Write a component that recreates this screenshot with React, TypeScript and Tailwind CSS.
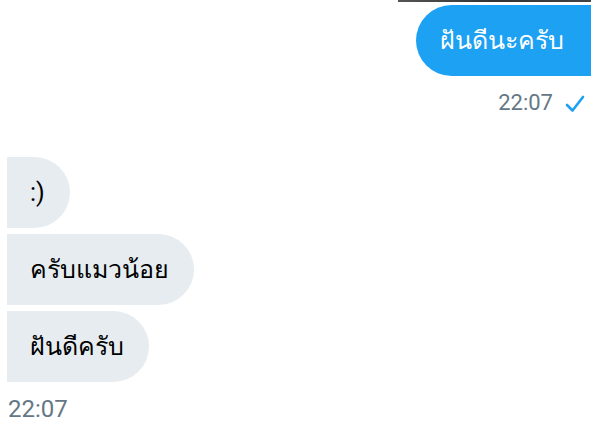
import React from 'react';

const incoming = [':)', 'ครับแมวน้อย', 'ฝันดีครับ'];

export default function App() {
  return (
    <div className="w-[615px] h-[422px] overflow-hidden bg-white font-['Roboto',_sans-serif] pl-[7px] pr-[24px]">
      <div className="flex justify-end">
        <div className="h-[2px] w-[193px] bg-gradient-to-r from-[#555] via-[#333] to-[#444]" />
      </div>

      {/* outgoing */}
      <div className="flex flex-col items-end mt-[3px]">
        <div className="h-[71px] flex items-center bg-[#1da1f2] text-white text-[25px] rounded-l-[36px] pl-[24px] pr-[27px]">
          ฝันดีนะครับ
        </div>
        <div className="flex items-center gap-[12px] mt-[14px] text-[22px] text-[#657786] h-[24px]">
          <span>22:07</span>
          <svg width="20" height="18" viewBox="0 0 20 18" className="mr-[6px] mt-[4px]">
            <path d="M2 10 L7.5 15.5 L18 2" fill="none" stroke="#1da1f2" strokeWidth="2.6" strokeLinecap="round" strokeLinejoin="round" />
          </svg>
        </div>
      </div>

      {/* incoming */}
      <div className="flex flex-col items-start gap-[6px] mt-[43px]">
        {incoming.map((msg, i) => (
          <div
            key={i}
            className="h-[71px] flex items-center bg-[#e6ecf0] text-black text-[25px] rounded-r-[36px] pl-[23px] pr-[25px]"
          >
            {msg}
          </div>
        ))}
      </div>
      <div className="mt-[14px] text-[24px] text-[#657786] leading-[26px] pl-[1px]">22:07</div>
    </div>
  );
}
